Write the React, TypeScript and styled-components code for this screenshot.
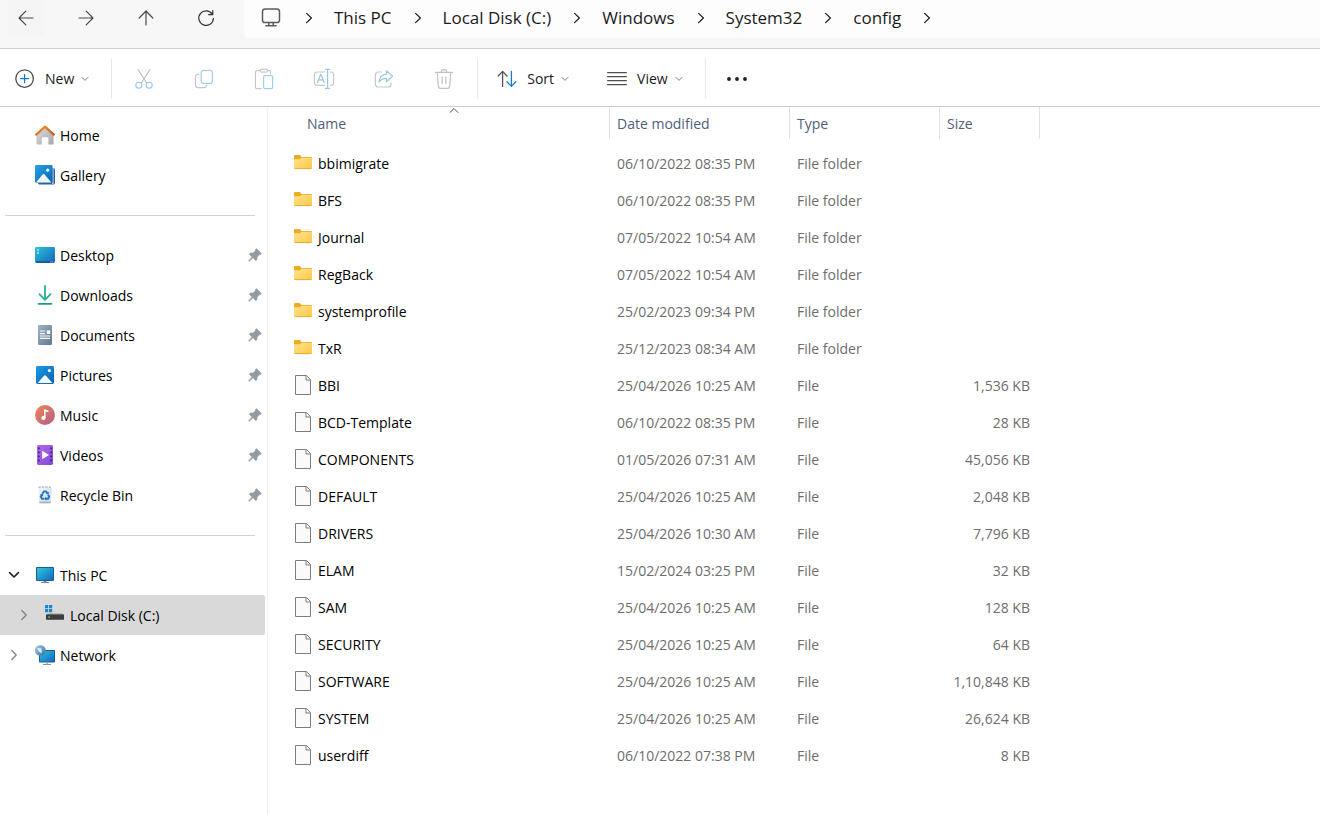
import React from "react";
import styled, { createGlobalStyle } from "styled-components";

const GlobalStyle = createGlobalStyle`
  *, *::before, *::after { box-sizing: border-box; }
  html, body, #root { height: 100%; }
  body {
    margin: 0;
    background: #ffffff;
    color: #1b1b1b;
    font-family: "Open Sans", "Noto Sans", sans-serif;
    font-size: 14px;
    line-height: 20px;
  }
  button { font: inherit; color: inherit; background: none; border: 0; padding: 0; cursor: default; }
  a { color: inherit; text-decoration: none; cursor: default; }
  svg { display: block; flex: none; }
`;

/* ---------- layout ---------- */

const Window = styled.div`
  display: flex;
  flex-direction: column;
  min-height: 100%;
`;

const TopBar = styled.header`
  display: flex;
  align-items: flex-start;
  height: 49px;
  background: #f7f7f7;
  border-bottom: 1px solid #cfcfcf;
`;

const NavButtons = styled.div`
  display: flex;
  gap: 24px;
  padding: 0 20px 0 8px;
`;

const NavButton = styled.button<{ $hovered?: boolean }>`
  display: flex;
  align-items: center;
  justify-content: center;
  width: 36px;
  height: 36px;
  border-radius: 0 0 4px 4px;
  background: ${(p) => (p.$hovered ? "#f5f5f5" : "transparent")};
`;

const AddressBar = styled.nav`
  flex: 1;
  height: 38px;
  padding-left: 17px;
  background: #fdfdfd;
  border-bottom-left-radius: 5px;
`;

const CrumbList = styled.ol`
  display: flex;
  align-items: center;
  height: 36px;
  margin: 0;
  padding: 0;
  list-style: none;
`;

const Crumb = styled.li`
  display: flex;
  align-items: center;
  gap: 22px;
  margin-right: 21px;
  font-size: 17px;
  line-height: 24px;
  white-space: nowrap;
`;

const CommandBar = styled.div`
  display: flex;
  align-items: center;
  height: 58px;
  padding: 2px 0 0 15px;
  border-bottom: 1px solid #cfcfcf;
`;

const Command = styled.button`
  display: flex;
  align-items: center;
  gap: 10px;
  height: 40px;
`;

const CommandLabel = styled.span`
  display: flex;
  align-items: center;
  gap: 7px;
  padding-top: 1px;
`;

const CommandDivider = styled.span`
  width: 1px;
  height: 40px;
  background: #e9e9e9;
`;

const IconCommands = styled.div`
  display: flex;
  gap: 38px;
  padding: 0 22px 0 21px;
`;

const ViewCommands = styled.div`
  display: flex;
  gap: 38px;
  padding: 0 22px 0 19px;
`;

const IconCommand = styled.button`
  display: flex;
  align-items: center;
  justify-content: center;
  width: 22px;
  height: 40px;
`;

const MoreCommand = styled(IconCommand)`
  margin-left: 20px;
`;

const NewArea = styled.div`
  padding-right: 22px;
`;

const Body = styled.div`
  display: flex;
  flex: 1;
`;

const Sidebar = styled.nav`
  width: 268px;
  flex: none;
  padding-top: 8px;
  border-right: 1px solid #f0f0f0;
`;

const SideGroup = styled.ul`
  margin: 0;
  padding: 0;
  list-style: none;
`;

const SideRule = styled.hr`
  height: 1px;
  margin: 20px 12px 19px 5px;
  border: 0;
  background: #d2d2d2;
`;

const SideRow = styled.li<{ $selected?: boolean; $indent?: boolean }>`
  display: flex;
  align-items: center;
  height: 40px;
  margin-right: 2px;
  padding-left: ${(p) => (p.$indent ? "17px" : "7px")};
  padding-right: 3px;
  border-radius: 0 2px 2px 0;
  color: #000000;
  background: ${(p) => (p.$selected ? "#d9d9d9" : "transparent")};
`;

const Expander = styled.button`
  display: flex;
  align-items: center;
  justify-content: center;
  width: 14px;
  height: 24px;
`;

const SideLink = styled.a`
  display: flex;
  flex: 1;
  align-items: center;
  gap: 5px;
  padding-left: 14px;
`;

const SideLabel = styled.span`
  padding-top: 2px;
`;

const ExpanderSpace = styled.span`
  width: 14px;
`;

const FilePane = styled.main`
  flex: 1;
  min-width: 0;
`;

const FileTable = styled.table`
  width: 772px;
  table-layout: fixed;
  border-collapse: collapse;
`;

const HeadCell = styled.th<{ $w: number; $lead?: boolean }>`
  width: ${(p) => p.$w}px;
  height: 38px;
  padding: 0 0 6px ${(p) => (p.$lead ? "31px" : "0")};
  font-weight: 400;
  text-align: left;
`;

const HeadButton = styled.button<{ $lead?: boolean }>`
  position: relative;
  display: flex;
  align-items: center;
  width: 100%;
  height: 32px;
  padding: 2px 0 0 ${(p) => (p.$lead ? "8px" : "7px")};
  border-right: 1px solid #e2e2e2;
  color: #4f6079;
`;

const SortMark = styled.span`
  position: absolute;
  top: 0;
  left: 50%;
  transform: translateX(-50%);
`;

const Cell = styled.td<{ $right?: boolean }>`
  height: 37px;
  padding: 0 10px 0 7px;
  color: #6d6d6d;
  text-align: ${(p) => (p.$right ? "right" : "left")};
  white-space: nowrap;
`;

const NameCell = styled(Cell)`
  padding-left: 26px;
  color: #000000;
`;

const FileName = styled.span`
  display: flex;
  align-items: center;
  gap: 5px;

  svg { margin-bottom: 2px; }
`;

/* ---------- icons ---------- */

const Line = ({
  w, h, color = "#4a4a4a", sw = 1.2, children,
}: { w: number; h: number; color?: string; sw?: number; children: React.ReactNode }) => (
  <svg width={w} height={h} viewBox={`0 0 ${w} ${h}`} fill="none" stroke={color} strokeWidth={sw} strokeLinecap="round" strokeLinejoin="round" aria-hidden="true">
    {children}
  </svg>
);

const BackIcon = () => <Line w={16} h={16}><path d="M15 8H1.2M7.8 1.2 1 8l6.8 6.8" /></Line>;
const ForwardIcon = () => <Line w={16} h={16}><path d="M1 8h13.8M8.2 1.2 15 8l-6.8 6.8" /></Line>;
const UpIcon = () => <Line w={16} h={16}><path d="M8 15V1.2M1.2 8 8 1l6.8 7" /></Line>;
const RefreshIcon = () => (
  <Line w={18} h={18} color="#333333"><path d="M15.4 5.4A7.3 7.3 0 1 0 16.4 9.4M15.8 1.6v4h-4.2" /></Line>
);
const MonitorIcon = () => (
  <Line w={22} h={20} sw={1.5} color="#5c5c5c">
    <rect x="1.5" y="1" width="17" height="13.5" rx="2.6" />
    <path d="M7.8 14.5v3M12.2 14.5v3M5 17.8h10" />
  </Line>
);
const CrumbChevron = () => <Line w={8} h={12} sw={1.3} color="#222222"><path d="M1.6 1.4 6.4 6l-4.8 4.6" /></Line>;
const DownChevron = () => <Line w={8} h={6} sw={1} color="#7c7c7c"><path d="M1 1.4 4 4.4l3-3" /></Line>;
const SortChevron = () => <Line w={10} h={7} sw={1} color="#555555"><path d="M1 5.5 5 1.5l4 4" /></Line>;

const NewIcon = () => (
  <Line w={20} h={20} sw={1.3} color="#4b4b4b">
    <circle cx="9.6" cy="9.6" r="8.8" />
    <path d="M9.6 5.6v8M5.6 9.6h8" stroke="#1479c9" />
  </Line>
);
const CutIcon = () => (
  <Line w={20} h={22} sw={1.1} color="#b9bcbe">
    <path d="M4 1.5 12.6 15M16 1.5 7.4 15" />
    <circle cx="4.8" cy="17.2" r="3" stroke="#9ac6e8" />
    <circle cx="15.2" cy="17.2" r="3" stroke="#9ac6e8" />
  </Line>
);
const CopyIcon = () => (
  <Line w={20} h={20} sw={1.2} color="#c6c8ca">
    <path d="M4.6 5.4H4a2.6 2.6 0 0 0-2.6 2.6v7.6A3 3 0 0 0 4.4 18.6H10a2.8 2.8 0 0 0 2.8-2.2" />
    <rect x="7.2" y="1.4" width="11.2" height="13" rx="2.4" stroke="#a6cdea" />
  </Line>
);
const PasteIcon = () => (
  <Line w={20} h={22} sw={1.2} color="#c6c8ca">
    <path d="M6.4 2.6H3a1.6 1.6 0 0 0-1.6 1.6V19a1.6 1.6 0 0 0 1.6 1.6h4.2M13.6 2.6H15a1.6 1.6 0 0 1 1.6 1.6v1.6" />
    <rect x="6.2" y="1.2" width="7.4" height="3" rx="1.4" />
    <rect x="9.6" y="7.6" width="9" height="13" rx="1.4" stroke="#a6cdea" />
  </Line>
);
const RenameIcon = () => (
  <Line w={22} h={22} sw={1.2} color="#c6c8ca">
    <path d="M11.6 4H4a2.6 2.6 0 0 0-2.6 2.6v8A2.6 2.6 0 0 0 4 17.4h7.6M17.4 4h.8a2.4 2.4 0 0 1 2.4 2.4V15a2.4 2.4 0 0 1-2.4 2.4h-.8" />
    <path d="m4.4 14.4 3.4-8.2 3.4 8.2M5.6 11.8H10M12.4 1.4h4.4M12.4 20.4h4.4M14.6 1.4v19" stroke="#9ac6e8" />
  </Line>
);
const ShareIcon = () => (
  <Line w={20} h={20} sw={1.2} color="#c6c8ca">
    <path d="M7.4 3H4.2A2.8 2.8 0 0 0 1.4 5.8v9.4A2.8 2.8 0 0 0 4.2 18h10a2.8 2.8 0 0 0 2.8-2.8v-1.4" />
    <path d="M12.4 1.8v3.4C8 5.4 5.6 8.4 5 13c2-2.6 4-3.6 7.4-3.6v3.4l6.2-5.6Z" stroke="#9ac6e8" />
  </Line>
);
const TrashIcon = () => (
  <Line w={20} h={22} sw={1.2} color="#bfc1c3">
    <path d="M1.4 4.4h17.2M3.2 4.4l1.2 14a2.2 2.2 0 0 0 2.2 2h6.8a2.2 2.2 0 0 0 2.2-2l1.2-14M7.2 4.4a2.8 2.8 0 0 1 5.6 0M8.2 9v6.4M11.8 9v6.4" />
  </Line>
);
const SortIcon = () => (
  <Line w={20} h={18} sw={1.3} color="#555555">
    <path d="M5.6 16.4V1.6M1.2 6l4.4-4.6L10 6" />
    <path d="M14.4 1.4v14.8M10 11.8l4.4 4.6 4.4-4.6" stroke="#1a7cc8" />
  </Line>
);
const ViewIcon = () => (
  <Line w={20} h={14} sw={1.2} color="#4f4f4f">
    <path d="M.6 .7h18.8M.6 4.7h18.8M.6 8.7h18.8M.6 12.7h18.8" />
  </Line>
);
const MoreIcon = () => (
  <svg width="22" height="6" viewBox="0 0 22 6" fill="#1f1f1f" aria-hidden="true">
    <circle cx="3" cy="3" r="1.9" /><circle cx="11" cy="3" r="1.9" /><circle cx="19" cy="3" r="1.9" />
  </svg>
);

const Art = ({ children }: { children: React.ReactNode }) => (
  <svg width="20" height="20" viewBox="0 0 20 20" aria-hidden="true">{children}</svg>
);

const Grad = ({ id, from, to }: { id: string; from: string; to: string }) => (
  <linearGradient id={id} x1="0" y1="0" x2="1" y2="1">
    <stop offset="0" stopColor={from} /><stop offset="1" stopColor={to} />
  </linearGradient>
);

const HomeIcon = () => (
  <Art>
    <defs><Grad id="wall" from="#dedede" to="#a6a6aa" /><Grad id="roof" from="#f2932b" to="#c9541a" /></defs>
    <path d="M1.4 9.6 10 2l8.6 7.6v8.8a1 1 0 0 1-1 1h-4.2v-6.2a1 1 0 0 0-1-1H7.8a1 1 0 0 0-1 1v6.2H2.4a1 1 0 0 1-1-1Z" fill="url(#wall)" />
    <path d="M1.2 9.6 10 1.6l8.8 8" fill="none" stroke="url(#roof)" strokeWidth="2.2" strokeLinecap="round" strokeLinejoin="round" />
  </Art>
);
const GalleryIcon = () => (
  <Art>
    <defs><Grad id="gal" from="#27a0e6" to="#0863b4" /></defs>
    <rect x="3" y="3" width="17" height="16.6" rx="1.6" fill="#2c62a0" />
    <rect x="17.4" y="2" width="1" height="17" fill="#ffffff" />
    <rect x="0" y="0" width="17.6" height="18" rx="1.4" fill="url(#gal)" />
    <path d="m1 17.4 6.4-7.6a1.6 1.6 0 0 1 2.4 0l6.6 7.6Z" fill="#f3f8fd" />
    <circle cx="12.8" cy="5.2" r="1.6" fill="#ffffff" />
  </Art>
);
const DesktopIcon = () => (
  <Art>
    <defs><Grad id="desk" from="#2bc3d6" to="#1464c0" /></defs>
    <rect x="0" y="2" width="20" height="16" rx="1.4" fill="url(#desk)" />
    <path d="M1 17h18" stroke="#174f8e" strokeWidth="1.4" />
    <path d="M2.2 4.2h1.6v1.6H2.2zM2.2 7.2h1.6v1.6H2.2z" fill="#d8f6fb" />
    <path d="M15.4 17h.9M17.4 17h.9" stroke="#d8f6fb" strokeWidth="1" />
  </Art>
);
const DownloadsIcon = () => (
  <Art>
    <path d="M10 1v13.4M4.4 9.2 10 14.8l5.6-5.6" fill="none" stroke="#27b092" strokeWidth="1.8" strokeLinecap="round" strokeLinejoin="round" />
    <path d="M3.6 18.8h12.8" stroke="#1a9e82" strokeWidth="1.8" strokeLinecap="round" />
  </Art>
);
const DocumentsIcon = () => (
  <Art>
    <defs><Grad id="doc" from="#9fb1c6" to="#62788f" /></defs>
    <rect x="3" y="0" width="14" height="20" rx="1.2" fill="url(#doc)" />
    <path d="M5 6h5M5 8.6h5M5 11h10M5 13.4h10" stroke="#ffffff" strokeWidth="1.2" />
    <rect x="11.8" y="5.4" width="3.4" height="3.6" fill="#ffffff" />
  </Art>
);
const PicturesIcon = () => (
  <Art>
    <defs><Grad id="pic" from="#1d9be4" to="#075fb0" /></defs>
    <rect x="1" y="1" width="18" height="18" rx="1.4" fill="url(#pic)" />
    <path d="m2.6 18 6.2-7a1.6 1.6 0 0 1 2.4 0l6.2 7Z" fill="#f6fafe" />
    <circle cx="14.4" cy="5.6" r="1.6" fill="#ffffff" />
  </Art>
);
const MusicIcon = () => (
  <Art>
    <defs><Grad id="mus" from="#ec8a4e" to="#b75c8c" /></defs>
    <circle cx="10" cy="10" r="10" fill="url(#mus)" />
    <circle cx="8.4" cy="13" r="2.1" fill="#ffffff" />
    <path d="M9.8 13V5.2l3.6 1.4" fill="none" stroke="#ffffff" strokeWidth="1.6" />
  </Art>
);
const VideosIcon = () => (
  <Art>
    <defs><Grad id="vid" from="#b06bee" to="#8346d4" /></defs>
    <rect x="2" y="0" width="16" height="20" rx="1.4" fill="url(#vid)" />
    <path d="M3.8 2.6v16M16.2 2.6v16" stroke="#3c1d78" strokeWidth="1.6" strokeDasharray="1.6 2.4" />
    <path d="M7.2 5.8v8.4L14 10Z" fill="#ffffff" />
  </Art>
);
const RecycleIcon = () => (
  <Art>
    <defs><Grad id="bin" from="#f4f6f8" to="#d3d8dd" /></defs>
    <path d="M3 3h14l-1.4 15.4H4.4Z" fill="url(#bin)" />
    <path d="M3.4 2.2h13.4" stroke="#a9afb6" strokeWidth="1.2" strokeDasharray="2.4 1" />
    <path d="M4.4 17.4h11.2" stroke="#a7b0b8" strokeWidth="1.6" />
    <g fill="none" stroke="#1c78cc" strokeWidth="1.9">
      <path d="m7.4 8.8 1.5-2.4h2.2l1.3 2" />
      <path d="m13 9.6 1.2 2.2-1.2 2h-2.4" />
      <path d="M9 13.8H7L5.8 11.6 7 9.8" />
    </g>
    <path d="m13.9 6.8-.3 3-2.7-1.3zM11.2 11.8v4l-2.2-2zM4.9 9.4l2.8-.8.6 3z" fill="#1c78cc" />
  </Art>
);
const ThisPcIcon = () => (
  <Art>
    <defs><Grad id="pc" from="#2ccbd8" to="#1567c4" /></defs>
    <rect x="1" y="2" width="18" height="14" rx="1" fill="#1a5c98" />
    <rect x="2" y="3" width="16" height="12" fill="url(#pc)" />
    <path d="M10 16v1.4" stroke="#7e868e" strokeWidth="3" />
    <path d="M6 17.5h8" stroke="#7e868e" strokeWidth="1" />
  </Art>
);
const DiskIcon = () => (
  <Art>
    <path d="M0 0h3.2v3.2H0zM4 0h3.2v3.2H4zM0 4h3.2v3.2H0zM4 4h3.2v3.2H4z" fill="#1c86d0" />
    <path d="M3 8.4h14l2 1.6H1z" fill="#9a9a9a" />
    <rect x="1" y="9.4" width="18" height="5.4" rx=".6" fill="#3d3d3d" />
    <rect x="3.2" y="11.4" width="1.8" height="1.4" fill="#55d060" />
  </Art>
);
const NetworkIcon = () => (
  <Art>
    <defs><Grad id="net" from="#2cc3d8" to="#1567c4" /><Grad id="globe" from="#a9cfe6" to="#2e6f9f" /></defs>
    <rect x="4" y="5" width="16" height="12.6" rx="1" fill="#1a5c98" />
    <rect x="5" y="6" width="14" height="10.6" fill="url(#net)" />
    <path d="M12 17.6v2M8 19.5h8" stroke="#8d959c" strokeWidth="1.2" />
    <circle cx="5.4" cy="5.4" r="5.4" fill="url(#globe)" />
    <path d="M2.2 3.4c1.8-1 3.2.4 4.4.2-.4 1.6.8 2.2 0 4.4C4.6 7.6 3 5.8 2.2 3.4Z" fill="#d8edf6" />
  </Art>
);
const PinIcon = () => (
  <svg width="14" height="14" viewBox="0 0 14 14" aria-hidden="true">
    <path d="M8.5.6 13.4 5.4 12.2 6.7 11.5 6.6 9.2 9 9 11.6 7.8 12.7 5 9.8 1.1 13.3.5 12.8 4 9 1.3 6.3 2.4 5.1 5.1 4.9 7.4 2.6 7.3 1.8Z" fill="#929ca3" stroke="#929ca3" strokeWidth=".6" strokeLinejoin="round" />
  </svg>
);
const RightChevron = () => <Line w={8} h={12} sw={1.4} color="#868686"><path d="M1.8 1.6 6.2 6l-4.4 4.4" /></Line>;
const OpenChevron = () => <Line w={12} h={8} sw={1.6} color="#222222"><path d="M1.6 1.6 6 6l4.4-4.4" /></Line>;

const FolderIcon = () => (
  <svg width="19" height="20" viewBox="0 0 19 20" aria-hidden="true">
    <defs><Grad id="fold" from="#ffe291" to="#fcc944" /></defs>
    <path d="M0 3a1 1 0 0 1 1-1h4.8L7.6 4H17a1 1 0 0 1 1 1v4H0Z" fill="#ebac22" />
    <path d="M0 6.2h6L7.6 4.8H18V15a1 1 0 0 1-1 1H1a1 1 0 0 1-1-1Z" fill="url(#fold)" />
    <path d="M.6 15.6h16.8" stroke="#e2a93a" strokeWidth=".9" />
  </svg>
);
const FileIcon = () => (
  <svg width="19" height="20" viewBox="0 0 19 20" aria-hidden="true">
    <path d="M1.5.5h11l4 4v15h-15Z" fill="#fafafa" stroke="#7d7d7d" />
    <path d="M12 .5v4.5h4.5" fill="none" stroke="#7d7d7d" />
  </svg>
);

/* ---------- data ---------- */

const crumbs = ["This PC", "Local Disk (C:)", "Windows", "System32", "config"];

const pinned = [
  { label: "Desktop", Icon: DesktopIcon },
  { label: "Downloads", Icon: DownloadsIcon },
  { label: "Documents", Icon: DocumentsIcon },
  { label: "Pictures", Icon: PicturesIcon },
  { label: "Music", Icon: MusicIcon },
  { label: "Videos", Icon: VideosIcon },
  { label: "Recycle Bin", Icon: RecycleIcon },
];

const tools = [
  { label: "Cut", Icon: CutIcon },
  { label: "Copy", Icon: CopyIcon },
  { label: "Paste", Icon: PasteIcon },
  { label: "Rename", Icon: RenameIcon },
  { label: "Share", Icon: ShareIcon },
  { label: "Delete", Icon: TrashIcon },
];

const files: [string, string, string?][] = [
  ["bbimigrate", "06/10/2022 08:35 PM"],
  ["BFS", "06/10/2022 08:35 PM"],
  ["Journal", "07/05/2022 10:54 AM"],
  ["RegBack", "07/05/2022 10:54 AM"],
  ["systemprofile", "25/02/2023 09:34 PM"],
  ["TxR", "25/12/2023 08:34 AM"],
  ["BBI", "25/04/2026 10:25 AM", "1,536 KB"],
  ["BCD-Template", "06/10/2022 08:35 PM", "28 KB"],
  ["COMPONENTS", "01/05/2026 07:31 AM", "45,056 KB"],
  ["DEFAULT", "25/04/2026 10:25 AM", "2,048 KB"],
  ["DRIVERS", "25/04/2026 10:30 AM", "7,796 KB"],
  ["ELAM", "15/02/2024 03:25 PM", "32 KB"],
  ["SAM", "25/04/2026 10:25 AM", "128 KB"],
  ["SECURITY", "25/04/2026 10:25 AM", "64 KB"],
  ["SOFTWARE", "25/04/2026 10:25 AM", "1,10,848 KB"],
  ["SYSTEM", "25/04/2026 10:25 AM", "26,624 KB"],
  ["userdiff", "06/10/2022 07:38 PM", "8 KB"],
];

const Place = ({ label, Icon }: { label: string; Icon: React.ComponentType }) => (
  <SideLink href="#"><Icon /><SideLabel>{label}</SideLabel></SideLink>
);

export default function App() {
  return (
    <Window>
      <GlobalStyle />
      <TopBar>
        <NavButtons>
          <NavButton $hovered aria-label="Back"><BackIcon /></NavButton>
          <NavButton aria-label="Forward"><ForwardIcon /></NavButton>
          <NavButton aria-label="Up"><UpIcon /></NavButton>
          <NavButton aria-label="Refresh"><RefreshIcon /></NavButton>
        </NavButtons>
        <AddressBar aria-label="Address">
          <CrumbList>
            <Crumb><MonitorIcon /><CrumbChevron /></Crumb>
            {crumbs.map((c) => (
              <Crumb key={c}><a href="#">{c}</a><CrumbChevron /></Crumb>
            ))}
          </CrumbList>
        </AddressBar>
      </TopBar>

      <CommandBar>
        <NewArea>
          <Command><NewIcon /><CommandLabel>New<DownChevron /></CommandLabel></Command>
        </NewArea>
        <CommandDivider />
        <IconCommands>
          {tools.map(({ label, Icon }) => (
            <IconCommand key={label} aria-label={label}><Icon /></IconCommand>
          ))}
        </IconCommands>
        <CommandDivider />
        <ViewCommands>
          <Command><SortIcon /><CommandLabel>Sort<DownChevron /></CommandLabel></Command>
          <Command><ViewIcon /><CommandLabel>View<DownChevron /></CommandLabel></Command>
        </ViewCommands>
        <CommandDivider />
        <MoreCommand aria-label="See more"><MoreIcon /></MoreCommand>
      </CommandBar>

      <Body>
        <Sidebar aria-label="Folders">
          <SideGroup>
            <SideRow><ExpanderSpace /><Place label="Home" Icon={HomeIcon} /></SideRow>
            <SideRow><ExpanderSpace /><Place label="Gallery" Icon={GalleryIcon} /></SideRow>
          </SideGroup>
          <SideRule />
          <SideGroup>
            {pinned.map(({ label, Icon }) => (
              <SideRow key={label}>
                <ExpanderSpace />
                <Place label={label} Icon={Icon} />
                <PinIcon />
              </SideRow>
            ))}
          </SideGroup>
          <SideRule />
          <SideGroup>
            <SideRow>
              <Expander aria-label="Collapse This PC"><OpenChevron /></Expander>
              <Place label="This PC" Icon={ThisPcIcon} />
            </SideRow>
            <SideRow $selected $indent>
              <Expander aria-label="Expand Local Disk"><RightChevron /></Expander>
              <Place label="Local Disk (C:)" Icon={DiskIcon} />
            </SideRow>
            <SideRow>
              <Expander aria-label="Expand Network"><RightChevron /></Expander>
              <Place label="Network" Icon={NetworkIcon} />
            </SideRow>
          </SideGroup>
        </Sidebar>

        <FilePane>
          <FileTable>
            <thead>
              <tr>
                <HeadCell $w={342} $lead aria-sort="ascending">
                  <HeadButton $lead>Name<SortMark><SortChevron /></SortMark></HeadButton>
                </HeadCell>
                <HeadCell $w={180}><HeadButton>Date modified</HeadButton></HeadCell>
                <HeadCell $w={150}><HeadButton>Type</HeadButton></HeadCell>
                <HeadCell $w={100}><HeadButton>Size</HeadButton></HeadCell>
              </tr>
            </thead>
            <tbody>
              {files.map(([name, date, size]) => (
                <tr key={name}>
                  <NameCell><FileName>{size ? <FileIcon /> : <FolderIcon />}{name}</FileName></NameCell>
                  <Cell>{date}</Cell>
                  <Cell>{size ? "File" : "File folder"}</Cell>
                  <Cell $right>{size}</Cell>
                </tr>
              ))}
            </tbody>
          </FileTable>
        </FilePane>
      </Body>
    </Window>
  );
}
